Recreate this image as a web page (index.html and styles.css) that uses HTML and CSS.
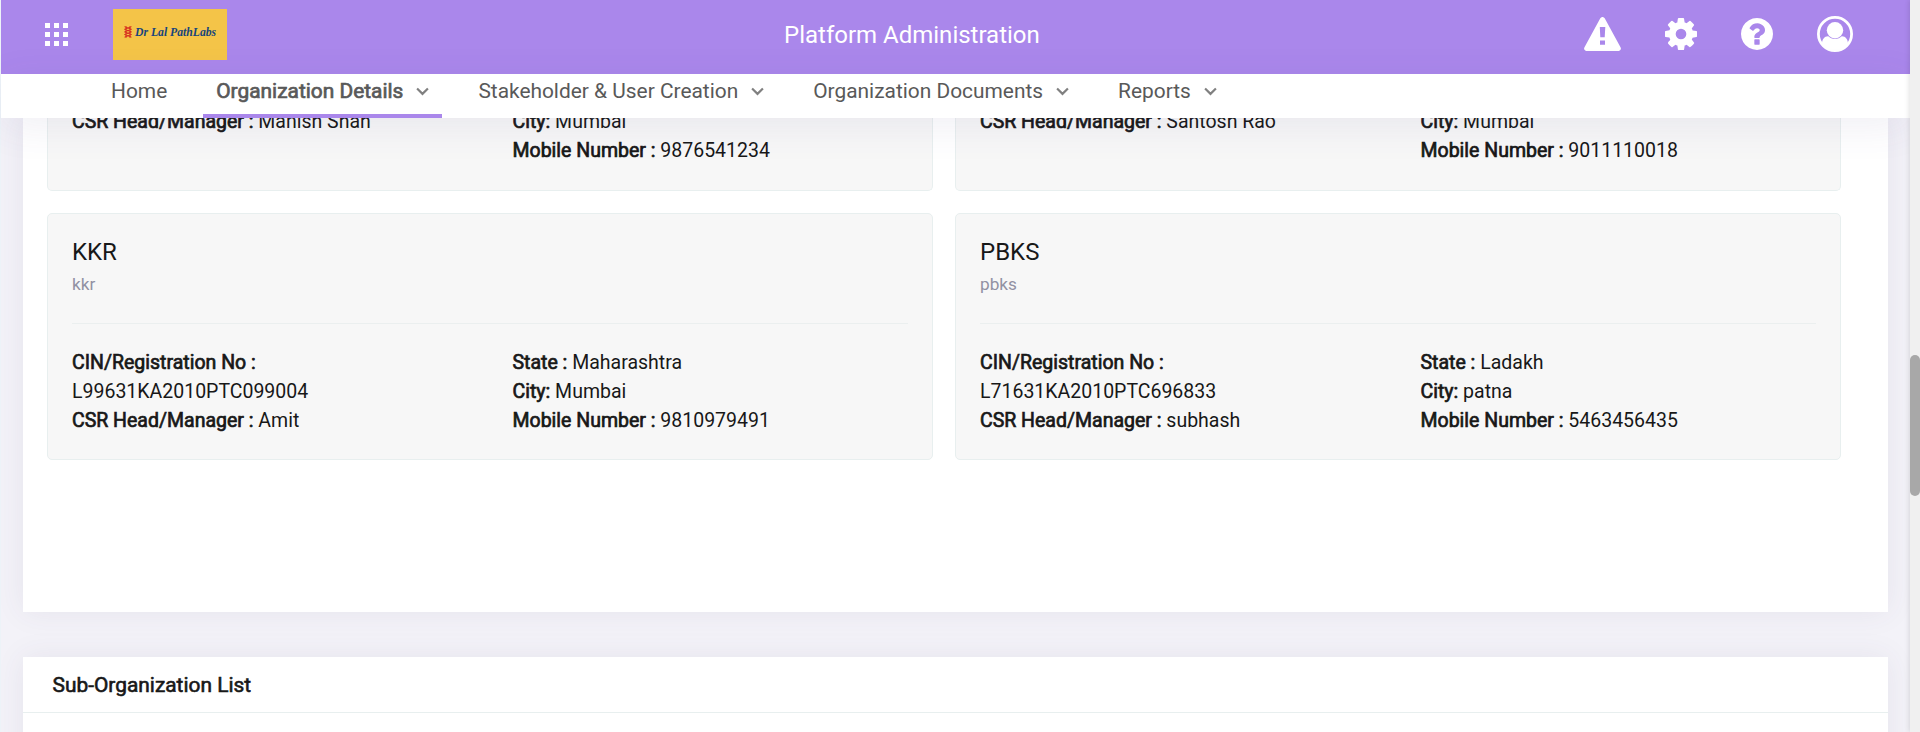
FILE: index.html
```html
<!DOCTYPE html>
<html lang="en">
<head>
<meta charset="utf-8">
<title>Platform Administration</title>
<link rel="stylesheet" href="styles.css">
</head>
<body>
<div class="app">
  <div class="page">
    <header class="topbar">
      <svg class="grid-icon" viewBox="0 0 23 23" width="23" height="23"><path d="M0 0h5v5H0zM9 0h5v5H9zM18 0h5v5h-5zM0 9h5v5H0zM9 9h5v5H9zM18 9h5v5h-5zM0 18h5v5H0zM9 18h5v5H9zM18 18h5v5h-5z"/></svg>
      <div class="logo">
        <svg width="8" height="12" viewBox="0 0 8 12"><path d="M.5 .7l7 2.600M.5 3.300l7-2.600M.5 3.300l7 2.600M.5 5.900l7-2.600M.5 5.900l7 2.600M.5 8.500l7-2.600M.5 8.500l7 2.600M.5 11.100l7-2.600M2 0v12M6 0v12" fill="none" stroke="#d5281e" stroke-width=".9"/></svg>
        <span class="logo-text">Dr Lal PathLabs</span>
      </div>
      <h1 class="title">Platform Administration</h1>
      <div class="actions">
        <svg width="37" height="34" viewBox="0 0 37 34"><path fill-rule="evenodd" d="M16.300 1.300a2.500 2.500 0 0 1 4.400 0l15.800 29a2.400 2.400 0 0 1-2.200 3.700H2.700a2.400 2.400 0 0 1-2.200-3.700zM15.800 10l.5 10.300h4.400l.6-10.300zM16 23.500v4.300h5v-4.300z"/></svg>
        <svg width="32" height="32" viewBox="0 0 1536 1536"><path d="M1024 768q0-106-75-181t-181-75-181 75-75 181 75 181 181 75 181-75 75-181zm512-109v222q0 12-8 23t-20 13l-185 28q-19 54-39 91 35 50 107 138 10 12 10 25t-9 23q-27 37-99 108t-94 71q-12 0-26-9l-138-108q-44 23-91 38-16 136-29 186-7 28-36 28H657q-14 0-24.500-8.500T621 1506l-28-184q-49-16-90-37l-141 107q-10 9-25 9-14 0-25-11-126-114-165-168-7-10-7-23 0-12 8-23 15-21 51-66.500t54-70.500q-27-50-41-99L29 913q-13-2-21-12.500T0 877V655q0-12 8-23t19-13l186-28q14-46 39-92-40-57-107-138-10-12-10-24 0-10 9-23 26-36 98.500-107.500T337 135q13 0 26 10l138 107q44-23 91-38 16-136 29-186 7-28 36-28h222q14 0 24.500 8.500T915 30l28 184q49 16 90 37l142-107q9-9 24-9 13 0 25 10 129 119 165 170 7 8 7 22 0 12-8 23-15 21-51 66.500t-54 70.500q26 50 41 98l183 28q13 2 21 12.500t8 23.500z"/></svg>
        <svg width="32" height="32" viewBox="0 0 1536 1536"><path d="M896 1248v-192q0-14-9-23t-23-9H672q-14 0-23 9t-9 23v192q0 14 9 23t23 9h192q14 0 23-9t9-23zm256-672q0-88-55.500-163T958 297t-170-41q-243 0-371 213-15 24 8 42l132 100q7 6 19 6 16 0 25-12 53-68 86-92 34-24 86-24 48 0 85.500 26t37.500 59q0 38-20 61t-68 45q-63 28-115.500 86.500T640 892v36q0 14 9 23t23 9h192q14 0 23-9t9-23q0-19 21.500-49.500T972 829q32-18 49-28.500t46-35 44.500-48 28-60.500 12.500-81zm384 192q0 209-103 385.500T1153.500 1433 768 1536t-385.500-103T103 1153.500 0 768t103-385.500T382.500 103 768 0t385.500 103T1433 382.500 1536 768z"/></svg>
        <svg width="36" height="36" viewBox="0 0 36 36"><circle cx="18" cy="18" r="16.600" fill="none" stroke="#fff" stroke-width="2.800"/><circle cx="18" cy="14.300" r="8.200"/><path d="M5 27.500c0-4 2.500-7.500 6.300-7.300 1.500 1.600 4 2.700 6.700 2.700s5.200-1.100 6.700-2.700c3.800-.2 6.300 3.300 6.300 7.300A16.800 16.800 0 0 1 18 34.500 16.800 16.800 0 0 1 5 27.500z"/></svg>
      </div>
    </header>

    <nav class="menu">
      <a class="item">Home</a>
      <a class="item active">Organization Details <svg class="chev" viewBox="0 0 12 8"><path d="M1 1.200l5 5 5-5"/></svg></a>
      <a class="item">Stakeholder &amp; User Creation <svg class="chev" viewBox="0 0 12 8"><path d="M1 1.200l5 5 5-5"/></svg></a>
      <a class="item">Organization Documents <svg class="chev" viewBox="0 0 12 8"><path d="M1 1.200l5 5 5-5"/></svg></a>
      <a class="item">Reports <svg class="chev" viewBox="0 0 12 8"><path d="M1 1.200l5 5 5-5"/></svg></a>
    </nav>

    <main class="content">
      <section class="panel orgs">
        <article class="card cut">
          <div class="cols">
            <div><p><b>CSR Head/Manager :</b> Manish Shah</p></div>
            <div><p><b>City:</b> Mumbai</p><p><b>Mobile Number :</b> 9876541234</p></div>
          </div>
        </article>
        <article class="card cut">
          <div class="cols">
            <div><p><b>CSR Head/Manager :</b> Santosh Rao</p></div>
            <div><p><b>City:</b> Mumbai</p><p><b>Mobile Number :</b> 9011110018</p></div>
          </div>
        </article>
        <article class="card">
          <h2 class="name">KKR</h2>
          <p class="alias">kkr</p>
          <div class="cols">
            <div><p><b>CIN/Registration No :</b></p><p>L99631KA2010PTC099004</p><p><b>CSR Head/Manager :</b> Amit</p></div>
            <div><p><b>State :</b> Maharashtra</p><p><b>City:</b> Mumbai</p><p><b>Mobile Number :</b> 9810979491</p></div>
          </div>
        </article>
        <article class="card">
          <h2 class="name">PBKS</h2>
          <p class="alias">pbks</p>
          <div class="cols">
            <div><p><b>CIN/Registration No :</b></p><p>L71631KA2010PTC696833</p><p><b>CSR Head/Manager :</b> subhash</p></div>
            <div><p><b>State :</b> Ladakh</p><p><b>City:</b> patna</p><p><b>Mobile Number :</b> 5463456435</p></div>
          </div>
        </article>
      </section>
      <section class="panel sub">
        <h3 class="sub-title">Sub-Organization List</h3>
      </section>
    </main>
  </div>
  <div class="scrollbar"><div class="thumb"></div></div>
</div>
</body>
</html>
```

FILE: styles.css
```css
* { box-sizing: border-box; margin: 0; padding: 0; }
body { font-family: Roboto, "Liberation Sans", sans-serif; color: #181818; background: #f3f2f8; overflow: hidden; }
.app { display: flex; width: 1920px; height: 732px; }
.page { flex: 1; display: flex; flex-direction: column; border-left: 1px solid #edf3f8; min-width: 0; }

.topbar { height: 74px; background: #aa87eb; display: grid; grid-template-columns: 68px 671px auto 1fr; align-items: center; padding: 0 57px 6px 44px; flex: none; }
.topbar svg { fill: #fff; display: block; }
.logo { width: 114px; height: 51px; background: #f4c448; display: flex; align-items: center; gap: 3px; padding: 0 0 4px 11px; }
.logo-text { font: italic bold 11.700px "Liberation Serif", serif; color: #17457c; white-space: nowrap; }
.title { font-size: 24px; font-weight: 400; color: #fff; padding-top: 2px; }
.actions { display: flex; justify-content: flex-end; align-items: center; }
.actions svg + svg { margin-left: 44px; }

.menu { height: 44px; background: #fff; display: flex; gap: 23px; padding-left: 97px; flex: none; position: relative; z-index: 1; box-shadow: 0 8px 40px rgba(80, 70, 130, .09); }
.item { display: flex; align-items: center; gap: 13px; padding: 0 13px 10px; font-size: 20.900px; color: #595959; white-space: nowrap; height: 44px; }
.item.active { -webkit-text-stroke: .7px #595959; border-bottom: 4px solid #aa87eb; padding-bottom: 6px; }
.chev { width: 13px; height: 9px; fill: none; stroke: #808080; stroke-width: 2; }

.content { flex: 1; overflow: hidden; padding: 0 22px; min-height: 0; }
.panel { background: #fff; box-shadow: 0 0 28px rgba(82, 63, 105, .08); }
.orgs { height: 494px; padding: 0 47px 0 24px; display: grid; grid-template-columns: 1fr 1fr; gap: 22px; align-content: start; }
.card { background: #f7f7f7; border: 1px solid #e8efef; border-radius: 5px; height: 247px; padding: 22px 24px; font-size: 19.500px; line-height: 29px; }
.cut { height: 73px; border-top: 0; border-radius: 0 0 5px 5px; padding-top: 0; overflow: hidden; }
.cut .cols { border-top: 0; padding-top: 0; margin-top: -11px; }
.name { font-size: 24px; font-weight: 400; line-height: 32px; }
.alias { font-size: 17.200px; line-height: 26px; color: #9191a3; margin: 3px 0 26px; }
.cols { display: grid; grid-template-columns: 440.500px 1fr; border-top: 1px solid #ebefef; padding-top: 24px; }
.card b { font-weight: 400; -webkit-text-stroke: .7px #181818; }
.sub { margin-top: 45px; height: 120px; }
.sub-title { height: 56px; border-bottom: 1px solid #e8efef; padding-left: 29.500px; line-height: 56px; font-size: 20.900px; font-weight: 400; -webkit-text-stroke: .6px #181818; }

.scrollbar { width: 10px; background: #f0f0f0; padding-top: 355px; position: relative; z-index: 2; box-shadow: -1px 0 5px rgba(0, 0, 0, .12); }
.thumb { height: 141px; background: #a8a8a8; border-radius: 5px; }
```
